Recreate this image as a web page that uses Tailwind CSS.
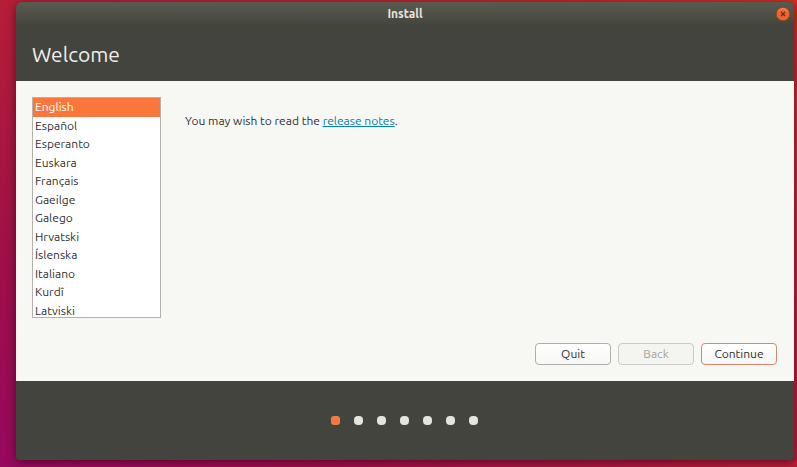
<!DOCTYPE html>
<html lang="en">
<head>
<meta charset="utf-8">
<meta name="viewport" content="width=device-width, initial-scale=1">
<title>Install</title>
<script src="https://cdn.jsdelivr.net/npm/@tailwindcss/browser@4"></script>
</head>
<body class="flex h-screen flex-col overflow-hidden bg-[radial-gradient(ellipse_at_0%_100%,#96095f_0%,#9e0f49_30%,#b41d38_68%,#cc3020_100%)] pt-[2px] pr-[3px] pb-[7px] pl-4 font-['Ubuntu','Noto_Sans',sans-serif] text-xs text-[#303030]">
<main class="flex flex-1 flex-col overflow-hidden rounded-t-md rounded-b-sm bg-[#43443d] shadow-[0_2px_10px_rgba(40,0,20,0.6)]">
  <header class="relative flex h-6 shrink-0 items-center justify-center bg-linear-to-b from-[#5a5b4f] to-[#43443d]">
    <h1 class="font-bold text-[#e8e6df]">Install</h1>
    <button type="button" aria-label="Close" class="absolute top-1 right-[3px]">
      <svg class="size-4" viewBox="0 0 16 16" fill="none">
        <circle cx="8" cy="8" r="6.8" fill="#f0622f" stroke="#8a4024" stroke-width=".8"/>
        <path d="M3.5 5.5A5 5 0 0 1 12.5 5.5" stroke="#ff8a58"/>
        <path d="M6 6l4 4M10 6l-4 4" stroke="#67301e" stroke-width="1.2"/>
      </svg>
    </button>
  </header>
  <h2 class="flex h-[55px] shrink-0 items-center px-4 text-[21px] text-[#eeeeec]">Welcome</h2>
  <section class="flex flex-1 flex-col justify-between bg-[#f7f7f3] p-4">
    <div class="flex gap-6">
      <select size="12" aria-label="Language" class="h-[221px] w-[129px] shrink-0 overflow-hidden border border-[#b5b2ac] bg-white p-0 outline-none">
        <option selected class="h-[19px] bg-[linear-gradient(#fb763c,#fb763c)] px-0.5 pt-0.5 pb-0 leading-[18px] text-white">English</option>
        <option class="h-[18px] px-0.5 pt-0.5 pb-0 leading-[18px]">Español</option>
        <option class="h-[19px] px-0.5 pt-0.5 pb-0 leading-[18px]">Esperanto</option>
        <option class="h-[18px] px-0.5 pt-0.5 pb-0 leading-[18px]">Euskara</option>
        <option class="h-[19px] px-0.5 pt-0.5 pb-0 leading-[18px]">Français</option>
        <option class="h-[18px] px-0.5 pt-0.5 pb-0 leading-[18px]">Gaeilge</option>
        <option class="h-[19px] px-0.5 pt-0.5 pb-0 leading-[18px]">Galego</option>
        <option class="h-[18px] px-0.5 pt-0.5 pb-0 leading-[18px]">Hrvatski</option>
        <option class="h-[19px] px-0.5 pt-0.5 pb-0 leading-[18px]">Íslenska</option>
        <option class="h-[18px] px-0.5 pt-0.5 pb-0 leading-[18px]">Italiano</option>
        <option class="h-[19px] px-0.5 pt-0.5 pb-0 leading-[18px]">Kurdî</option>
        <option class="h-[18px] px-0.5 pt-0.5 pb-0 leading-[18px]">Latviski</option>
      </select>
      <p class="pt-4">You may wish to read the <a href="#" class="text-[#087fac] underline">release notes</a>.</p>
    </div>
    <div class="flex justify-end gap-[7px] pr-px">
      <button type="button" class="h-[22px] w-[76px] rounded border border-[#b0aea8] bg-linear-to-b from-white to-[#f7f7f4]">Quit</button>
      <button type="button" disabled class="h-[22px] w-[76px] rounded border border-[#cccac5] bg-[#f4f4f0] text-[#a3a39f]">Back</button>
      <button type="button" class="h-[22px] w-[76px] rounded border border-[#dc8670] bg-linear-to-b from-white to-[#f7f7f4]">Continue</button>
    </div>
  </section>
  <footer class="flex h-[79px] shrink-0 items-center justify-center gap-3.5 pr-px">
    <span class="size-[9px] rounded-[3px] bg-[#f37a40]"></span>
    <span class="size-[9px] rounded-[4px] bg-[#e4e4e0]"></span>
    <span class="size-[9px] rounded-[4px] bg-[#e4e4e0]"></span>
    <span class="size-[9px] rounded-[4px] bg-[#e4e4e0]"></span>
    <span class="size-[9px] rounded-[4px] bg-[#e4e4e0]"></span>
    <span class="size-[9px] rounded-[4px] bg-[#e4e4e0]"></span>
    <span class="size-[9px] rounded-[4px] bg-[#e4e4e0]"></span>
  </footer>
</main>
</body>
</html>
